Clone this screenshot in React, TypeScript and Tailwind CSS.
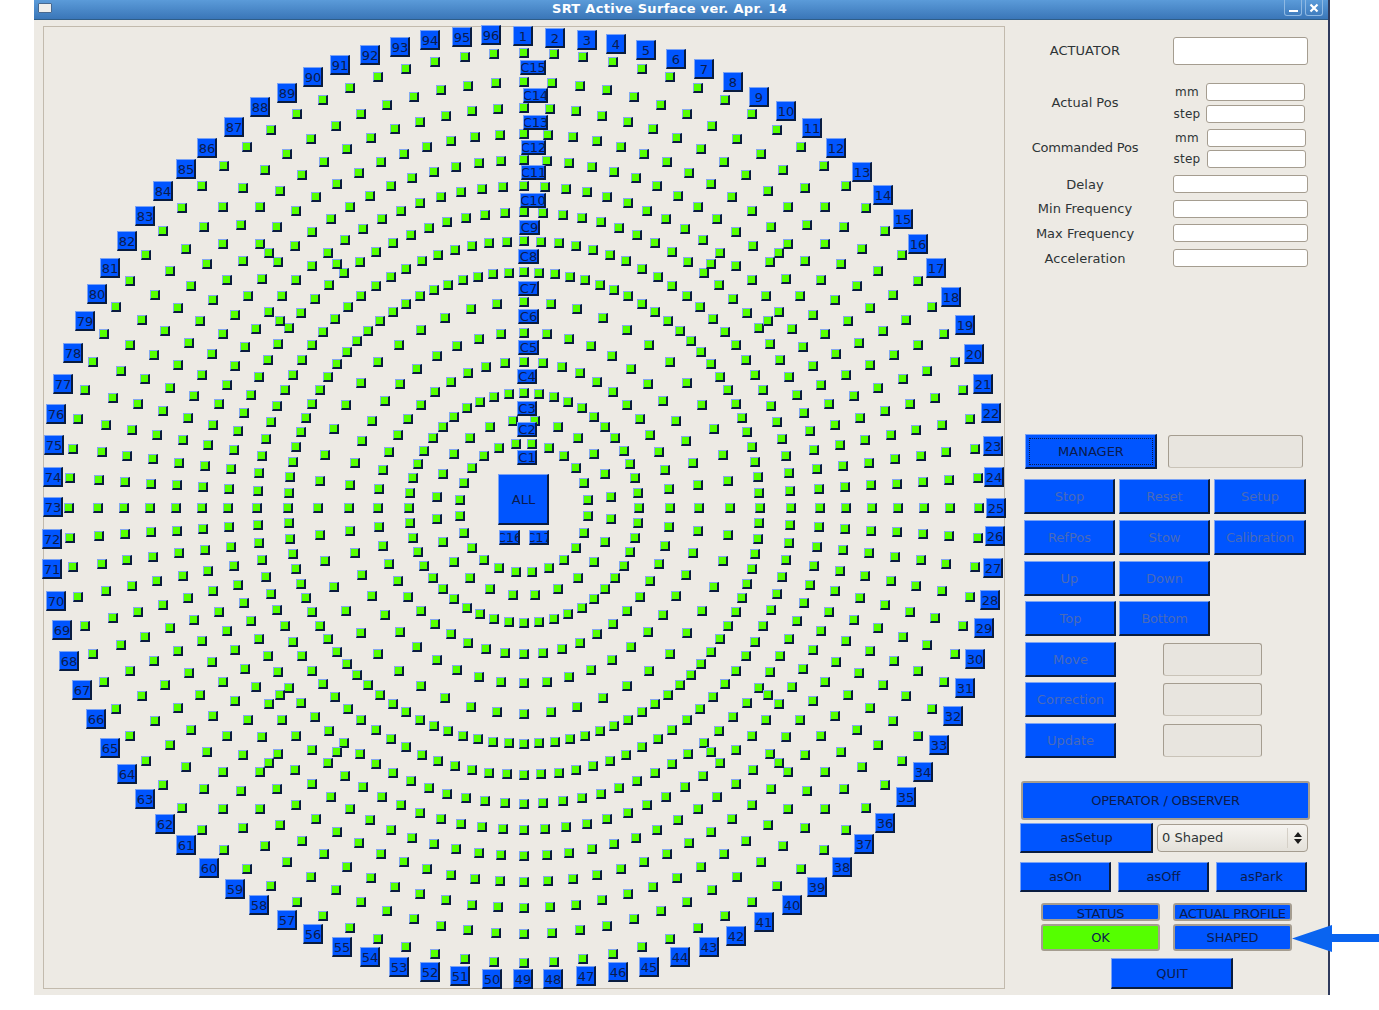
type Pos = [number, number];

// center of each numbered actuator sector button, in page pixels
const SECTORS: Pos[] = [
  [523, 36], [555, 38], [587, 40], [616, 44], [646, 50], [676, 59], [704, 69], [733, 82],
  [759, 97], [786, 111], [812, 128], [836, 148], [862, 172], [883, 195], [903, 219], [918, 244],
  [936, 268], [951, 297], [965, 325], [974, 354], [983, 384], [991, 413], [993, 446], [994, 477],
  [996, 508], [995, 536], [993, 568], [990, 600], [984, 628], [975, 659], [965, 688], [953, 716],
  [939, 745], [923, 772], [906, 797], [885, 823], [864, 844], [842, 867], [817, 887], [792, 905],
  [764, 922], [736, 936], [709, 947], [680, 957], [649, 967], [618, 972], [586, 976], [553, 979],
  [523, 979], [492, 979], [460, 976], [430, 972], [399, 967], [370, 957], [342, 947], [313, 934],
  [287, 920], [259, 905], [235, 889], [209, 868], [186, 845], [165, 824], [145, 799], [127, 774],
  [110, 748], [96, 719], [82, 690], [69, 661], [62, 630], [56, 601], [52, 569], [52, 539],
  [53, 507], [53, 477], [54, 445], [56, 414], [63, 384], [73, 353], [85, 321], [97, 294],
  [110, 268], [127, 241], [145, 216], [163, 191], [186, 169], [207, 148], [234, 127], [260, 107],
  [287, 93], [313, 77], [340, 65], [370, 55], [400, 47], [430, 40], [462, 37], [491, 35],
];

// circle buttons: label, left, top, width
const CIRCLES: [string, number, number, number][] = [
  ["C15", 520, 60, 26], ["C14", 523, 88, 25], ["C13", 523, 115, 25], ["C12", 521, 140, 25],
  ["C11", 521, 165, 25], ["C10", 520, 193, 26], ["C9", 519, 220, 21], ["C8", 518, 249, 21],
  ["C7", 518, 281, 21], ["C6", 518, 309, 21], ["C5", 518, 340, 21], ["C4", 517, 369, 20],
  ["C3", 517, 401, 20], ["C2", 517, 422, 20], ["C1", 517, 450, 20], ["C16", 499, 530, 21],
  ["C17", 529, 530, 20],
];

const CX = 524;
const CY = 508;

// radius, actuators on the ring, start angle
const RINGS: [number, number, number][] = [
  [65, 24, 7.5], [88, 24, 7.5], [115, 48, 0], [146, 48, 0], [175, 48, 0], [206, 48, 0],
  [236, 96, 0], [267, 96, 0], [296, 96, 0], [322, 96, 0], [348, 96, 0], [374, 96, 0],
  [400, 96, 0], [426, 96, 0], [455, 96, 0],
];

function polar(r: number, deg: number): Pos {
  const a = (deg * Math.PI) / 180;
  return [CX + r * Math.sin(a), CY - r * Math.cos(a)];
}

const DOTS: Pos[] = [];
RINGS.forEach(([r, n, start]) => {
  for (let i = 0; i < n; i++) DOTS.push(polar(r, start + (i * 360) / n));
});
// three extra actuators per quadrant
[0, 90, 180, 270].forEach((q) => {
  DOTS.push(polar(308, q + 37.5), polar(361, q + 45), polar(308, q + 52.5));
});

const bevel = "border-t border-l border-[#7ba3f5] border-r-2 border-b-2 border-r-[#0a1c3e] border-b-[#0a1c3e]";

function Btn({ label, w, h = 35, off, tight }: { label: string; w: string; h?: number; off?: boolean; tight?: boolean }) {
  return (
    <button
      className={`${w} ${h === 30 ? "h-[30px]" : "h-[35px]"} ${bevel} pt-[1px] pl-[1px] bg-[#0055ff] text-[13px] ${off ? "text-[#4a6bb8]" : "text-[#0b1b4d]"} ${tight ? "tracking-[-0.25px]" : ""}`}
    >
      {label}
    </button>
  );
}

function Field({ w, h = "h-[18px]" }: { w: string; h?: string }) {
  return <div className={`${w} ${h} rounded-[3px] border border-[#a59d90] bg-white`} />;
}

function Blank({ w }: { w: string }) {
  return <div className={`${w} h-[33px] rounded-[3px] border border-[#a59d90] border-b-[#c9c3b8] bg-[#e8e5df]`} />;
}

function Badge({ label, h, green, top }: { label: string; h: string; green?: boolean; top?: boolean }) {
  return (
    <div
      className={`w-[119px] ${h} rounded-[3px] border-2 border-[#a59d90] flex items-center justify-center text-[13px] leading-none tracking-[-0.2px] text-[#0b1b4d] ${top ? "pt-[2px]" : ""} ${green ? "bg-[#55ff00]" : "bg-[#0055ff]"}`}
    >
      {label}
    </div>
  );
}

function SurfaceMap() {
  return (
    <div className="relative w-[962px] h-[963px] mt-[6px] ml-[9px] border border-[#c2baad] shrink-0">
      {DOTS.map(([x, y], i) => (
        <div
          key={i}
          className="absolute w-[10px] h-[10px] bg-[#55ff00] border-t border-l border-[#84a8f0] border-r-2 border-b-2 border-r-[#0a1c3e] border-b-[#0a1c3e]"
          style={{ left: x - 44 - 5, top: y - 27 - 5 }}
        />
      ))}
      {SECTORS.map(([x, y], i) => (
        <div
          key={i}
          className={`absolute w-[20px] h-[20px] ${bevel} pt-[1px] pl-[1px] bg-[#0055ff] text-[13px] leading-none text-[#0b1b4d] flex items-center justify-center`}
          style={{ left: x - 44 - 10, top: y - 27 - 10 }}
        >
          {i + 1}
        </div>
      ))}
      {CIRCLES.map(([label, x, y, w]) => (
        <div
          key={label}
          className={`absolute h-[15px] ${bevel} pl-[1px] bg-[#0055ff] text-[13px] leading-none text-[#0b1b4d] flex items-center justify-center overflow-hidden whitespace-nowrap`}
          style={{ left: x - 44, top: y - 27, width: w }}
        >
          {label}
        </div>
      ))}
      <div
        className={`absolute w-[51px] h-[51px] ${bevel} pt-[1px] pl-[1px] bg-[#0055ff] text-[13px] text-[#0b1b4d] flex items-center justify-center`}
        style={{ left: 498 - 44, top: 474 - 27 }}
      >
        ALL
      </div>
    </div>
  );
}

function Readouts() {
  const unit = "w-[28px] mr-[5px] text-center text-[12px] tracking-[0.2px] text-[#2e3436]";
  const label = "w-[160px] text-center text-[13px] text-[#2e3436]";
  return (
    <div className="flex flex-col">
      <div className="flex items-center h-[28px]">
        <div className={label}>ACTUATOR</div>
        <div className="ml-[8px]"><Field w="w-[135px]" h="h-[28px]" /></div>
      </div>
      <div className="flex items-center h-[40px] mt-[18px]">
        <div className={`${label} -mt-[1px]`}>Actual Pos</div>
        <div className="ml-[8px] flex flex-col gap-[4px]">
          <div className="flex items-center"><div className={unit}>mm</div><Field w="w-[99px]" /></div>
          <div className="flex items-center"><div className={unit}>step</div><Field w="w-[99px]" /></div>
        </div>
      </div>
      <div className="flex items-center h-[39px] mt-[6px]">
        <div className={`${label} -mt-[2px] tracking-[-0.2px]`}>Commanded Pos</div>
        <div className="ml-[8px] flex flex-col gap-[3px]">
          <div className="flex items-center"><div className={`${unit} mr-[6px]`}>mm</div><Field w="w-[99px]" /></div>
          <div className="flex items-center"><div className={`${unit} mr-[6px]`}>step</div><Field w="w-[99px]" /></div>
        </div>
      </div>
      <div className="flex items-center h-[18px] mt-[7px]">
        <div className={`${label} pt-[2px]`}>Delay</div>
        <div className="ml-[8px]"><Field w="w-[135px]" /></div>
      </div>
      <div className="flex items-center h-[18px] mt-[7px]">
        <div className={label}>Min Frequency</div>
        <div className="ml-[8px]"><Field w="w-[135px]" /></div>
      </div>
      <div className="flex items-center h-[18px] mt-[6px]">
        <div className={`${label} pt-[2px]`}>Max Frequency</div>
        <div className="ml-[8px]"><Field w="w-[135px]" /></div>
      </div>
      <div className="flex items-center h-[18px] mt-[7px]">
        <div className={`${label} pt-[2px]`}>Acceleration</div>
        <div className="ml-[8px]"><Field w="w-[135px]" /></div>
      </div>
    </div>
  );
}

function ManagerControls() {
  return (
    <div className="flex flex-col mt-[167px]">
      <div className="flex items-center ml-[20px] gap-[11px]">
        <div className="relative">
          <Btn label="MANAGER" w="w-[132px]" />
          <div className="absolute inset-[4px] border border-dotted border-[#0b1b4d] pointer-events-none" />
        </div>
        <Blank w="w-[135px]" />
      </div>
      <div className="flex ml-[19px] gap-[4px] mt-[10px]">
        <Btn label="Stop" w="w-[91px]" off />
        <Btn label="Reset" w="w-[91px]" off />
        <Btn label="Setup" w="w-[92px]" off />
      </div>
      <div className="flex ml-[19px] gap-[4px] mt-[6px]">
        <Btn label="RefPos" w="w-[91px]" off />
        <Btn label="Stow" w="w-[91px]" off />
        <Btn label="Calibration" w="w-[92px]" off tight />
      </div>
      <div className="flex ml-[19px] gap-[4px] mt-[6px]">
        <Btn label="Up" w="w-[91px]" off />
        <Btn label="Down" w="w-[91px]" off />
      </div>
      <div className="flex ml-[20px] gap-[3px] mt-[5px]">
        <Btn label="Top" w="w-[91px]" off />
        <Btn label="Bottom" w="w-[91px]" off tight />
      </div>
      <div className="flex items-center ml-[20px] gap-[47px] mt-[6px]">
        <Btn label="Move" w="w-[91px]" off />
        <Blank w="w-[99px]" />
      </div>
      <div className="flex items-center ml-[20px] gap-[47px] mt-[5px]">
        <Btn label="Correction" w="w-[91px]" off />
        <Blank w="w-[99px]" />
      </div>
      <div className="flex items-center ml-[20px] gap-[47px] mt-[6px]">
        <Btn label="Update" w="w-[91px]" off />
        <Blank w="w-[99px]" />
      </div>
    </div>
  );
}

function ObserverControls() {
  return (
    <div className="flex flex-col mt-[23px]">
      <div className="ml-[16px] w-[289px] h-[39px] rounded-[3px] border-2 border-[#a59d90] bg-[#0055ff] flex items-center justify-center text-[13px] tracking-[-0.2px] text-[#0b1b4d]">
        OPERATOR / OBSERVER
      </div>
      <div className="flex items-center ml-[15px] gap-[4px] mt-[3px]">
        <Btn label="asSetup" w="w-[133px]" h={30} />
        <div className="w-[151px] h-[28px] rounded-[4px] border border-[#a59d90] bg-gradient-to-b from-[#f6f4f0] to-[#e4e1da] flex items-center text-[13px] text-[#2e3436]">
          <span className="ml-[4px] flex-1">0 Shaped</span>
          <div className="w-[20px] h-[20px] border-l border-[#d5d0c7] flex items-center justify-center">
            <svg width="8" height="12" viewBox="0 0 8 12">
              <path d="M4 0 L8 5 L0 5 Z M0 7 L8 7 L4 12 Z" fill="#1c1c1c" />
            </svg>
          </div>
        </div>
      </div>
      <div className="flex ml-[15px] gap-[7px] mt-[9px]">
        <Btn label="asOn" w="w-[91px]" h={30} />
        <Btn label="asOff" w="w-[91px]" h={30} />
        <Btn label="asPark" w="w-[91px]" h={30} />
      </div>
      <div className="flex ml-[36px] gap-[13px] mt-[11px]">
        <Badge label="STATUS" h="h-[18px]" top />
        <Badge label="ACTUAL PROFILE" h="h-[18px]" top />
      </div>
      <div className="flex ml-[36px] gap-[13px] mt-[3px]">
        <Badge label="OK" h="h-[27px]" green />
        <Badge label="SHAPED" h="h-[27px]" />
      </div>
      <div className={`ml-[106px] mt-[7px] w-[122px] h-[31px] ${bevel} pt-[1px] pl-[1px] bg-[#0055ff] flex items-center justify-center text-[13px] text-[#0b1b4d]`}>
        QUIT
      </div>
    </div>
  );
}

export default function App() {
  return (
    <div className="relative w-[1379px] h-[1010px] overflow-hidden bg-white font-['DejaVu_Sans',sans-serif]">
      <div className="ml-[34px] w-[1296px] h-[995px] flex flex-col bg-[#edeae4] border-r-2 border-[#2f3a5c]">
        {/* Title bar */}
        <div className="h-[20px] shrink-0 flex items-center bg-gradient-to-b from-[#5b9bd9] to-[#3a76b8] border-b border-[#2f5d88]">
          <div className="w-[21px] flex justify-center -mt-[3px]">
            <div className="w-[14px] h-[10px] rounded-[1px] bg-[#eeeeec] border border-[#47688f]" />
          </div>
          <div className="flex-1 -mt-[2px] text-center text-[13px] font-bold text-white leading-none tracking-[0.3px]">
            SRT Active Surface ver. Apr. 14
          </div>
          <div className="w-[44px] flex gap-[3px] self-start">
            <div className="w-[18px] h-[16px] rounded-b-[3px] border border-t-0 border-[#8fb9e3] flex items-end justify-center pb-[3px]">
              <div className="w-[9px] h-[2px] bg-white" />
            </div>
            <div className="w-[18px] h-[16px] rounded-b-[3px] border border-t-0 border-[#8fb9e3] flex items-center justify-center">
              <svg width="10" height="10" viewBox="0 0 10 10">
                <path d="M1.5 1.5 L8.5 8.5 M8.5 1.5 L1.5 8.5" stroke="#ffffff" strokeWidth="2.2" />
              </svg>
            </div>
          </div>
        </div>

        <div className="flex flex-1">
          <SurfaceMap />
          <div className="flex flex-col pt-[17px]">
            <Readouts />
            <ManagerControls />
            <ObserverControls />
          </div>
        </div>
      </div>

      {/* Annotation arrow pointing at the profile state */}
      <svg className="absolute left-[1292px] top-[925px]" width="87" height="27" viewBox="0 0 87 27">
        <path d="M0 13.5 L40 0 L40 9 L87 9 L87 17 L40 17 L40 27 Z" fill="#0a64f0" />
      </svg>
    </div>
  );
}
